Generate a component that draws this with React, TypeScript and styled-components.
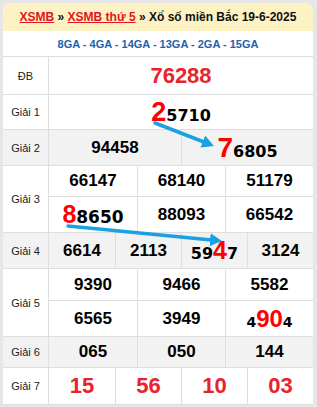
import styled, { createGlobalStyle } from 'styled-components';

const GlobalStyle = createGlobalStyle`
  html, body {
    margin: 0;
    padding: 0;
    background: #e6e6e6;
  }
  body {
    font-family: "Liberation Sans", Arial, sans-serif;
  }
`;

const Page = styled.div`
  padding: 3px 4px 0 3px;
`;

const Board = styled.div`
  position: relative;
  width: 310px;
  background: #fff;
  border-radius: 8px 8px 0 0;
  overflow: hidden;
`;

const Title = styled.h2`
  margin: 0;
  height: 28px;
  display: flex;
  align-items: center;
  justify-content: center;
  background: #fdf2c4;
  font-size: 12px;
  font-weight: bold;
  color: #111;
  white-space: pre;
  a {
    color: #e3141b;
    text-decoration: underline;
  }
`;

const Codes = styled.div`
  height: 26px;
  box-sizing: border-box;
  border-bottom: 1px solid #dedede;
  display: flex;
  align-items: center;
  justify-content: center;
  font-size: 11px;
  font-weight: bold;
  color: #1e63ad;
`;

const PrizeRow = styled.div<{ $shaded?: boolean }>`
  display: flex;
  background: ${({ $shaded }) => ($shaded ? '#f2f2f2' : '#fff')};
`;

const Label = styled.div`
  width: 46px;
  flex: none;
  box-sizing: border-box;
  border-right: 1px solid #dedede;
  border-bottom: 1px solid #dedede;
  display: flex;
  align-items: center;
  justify-content: center;
  font-size: 11px;
  color: #222;
`;

const Lines = styled.div`
  flex: 1;
  display: flex;
  flex-direction: column;
`;

const Line = styled.div<{ $cols: number; $h: number }>`
  display: grid;
  grid-template-columns: repeat(${({ $cols }) => $cols}, 1fr);
  height: ${({ $h }) => $h}px;
  box-sizing: border-box;
  border-bottom: 1px solid #dedede;
`;

const Cell = styled.div`
  display: flex;
  align-items: center;
  justify-content: center;
  white-space: nowrap;
  & + & {
    border-left: 1px solid #dedede;
  }
`;

type Kind = 'plain' | 'jackpot' | 'seven' | 'big' | 'rest' | 'tiny';

const Num = styled.span<{ $kind: Kind; $size?: number }>`
  font-weight: bold;
  font-family: ${({ $kind }) =>
    $kind === 'rest' || $kind === 'tiny'
      ? '"DejaVu Sans", Verdana, sans-serif'
      : '"Liberation Sans", Arial, sans-serif'};
  font-size: ${({ $kind, $size }) =>
    $size
      ? `${$size}px`
      : $kind === 'jackpot' || $kind === 'seven'
        ? '22px'
        : $kind === 'rest'
          ? '16px'
          : $kind === 'tiny'
            ? '14px'
            : '17px'};
  color: ${({ $kind }) =>
    $kind === 'jackpot' || $kind === 'seven'
      ? '#e8232c'
      : $kind === 'big'
        ? '#ff0000'
        : '#000'};
`;

const Arrows = styled.svg`
  position: absolute;
  left: 0;
  top: 0;
  width: 100%;
  height: 100%;
  pointer-events: none;
`;

type Seg = { t: string; k?: Kind; s?: number };
type PrizeLine = { h: number; cells: Seg[][] };
type Prize = { label: string; shaded?: boolean; lines: PrizeLine[] };

const plain = (...nums: string[]) => nums.map((t) => [{ t }]);

const prizes: Prize[] = [
  { label: 'ĐB', lines: [{ h: 38, cells: [[{ t: '76288', k: 'jackpot' }]] }] },
  {
    label: 'Giải 1',
    lines: [{ h: 35, cells: [[{ t: '2', k: 'big', s: 27 }, { t: '5710', k: 'rest' }]] }],
  },
  {
    label: 'Giải 2',
    shaded: true,
    lines: [
      {
        h: 36,
        cells: [[{ t: '94458' }], [{ t: '7', k: 'big', s: 28 }, { t: '6805', k: 'rest' }]],
      },
    ],
  },
  {
    label: 'Giải 3',
    lines: [
      { h: 31, cells: plain('66147', '68140', '51179') },
      {
        h: 36,
        cells: [
          [{ t: '8', k: 'big', s: 25 }, { t: '8650', k: 'rest', s: 17 }],
          [{ t: '88093' }],
          [{ t: '66542' }],
        ],
      },
    ],
  },
  {
    label: 'Giải 4',
    shaded: true,
    lines: [
      {
        h: 36,
        cells: [
          [{ t: '6614' }],
          [{ t: '2113' }],
          [
            { t: '59', k: 'rest' },
            { t: '4', k: 'big', s: 25 },
            { t: '7', k: 'rest' },
          ],
          [{ t: '3124' }],
        ],
      },
    ],
  },
  {
    label: 'Giải 5',
    lines: [
      { h: 32, cells: plain('9390', '9466', '5582') },
      {
        h: 36,
        cells: [
          [{ t: '6565' }],
          [{ t: '3949' }],
          [
            { t: '4', k: 'tiny' },
            { t: '90', k: 'big', s: 24 },
            { t: '4', k: 'tiny' },
          ],
        ],
      },
    ],
  },
  { label: 'Giải 6', shaded: true, lines: [{ h: 31, cells: plain('065', '050', '144') }] },
  {
    label: 'Giải 7',
    lines: [
      {
        h: 37,
        cells: ['15', '56', '10', '03'].map((t) => [{ t, k: 'seven' as Kind }]),
      },
    ],
  },
];

const arrows = [
  { x1: 152, y1: 120, x2: 203.5, y2: 140 },
  { x1: 65, y1: 223, x2: 211, y2: 237.2 },
];

const App = () => (
  <>
    <GlobalStyle />
    <Page>
      <Board>
        <Title>
          <a>XSMB</a> » <a>XSMB thứ 5</a> » Xổ số miền Bắc 19-6-2025
        </Title>
        <Codes>8GA - 4GA - 14GA - 13GA - 2GA - 15GA</Codes>
        {prizes.map((prize) => (
          <PrizeRow key={prize.label} $shaded={prize.shaded}>
            <Label>{prize.label}</Label>
            <Lines>
              {prize.lines.map((line, i) => (
                <Line key={i} $cols={line.cells.length} $h={line.h}>
                  {line.cells.map((segs, j) => (
                    <Cell key={j}>
                      <span>
                        {segs.map((seg, n) => (
                          <Num key={n} $kind={seg.k ?? 'plain'} $size={seg.s}>
                            {seg.t}
                          </Num>
                        ))}
                      </span>
                    </Cell>
                  ))}
                </Line>
              ))}
            </Lines>
          </PrizeRow>
        ))}
        <Arrows>
          <defs>
            <marker
              id="head"
              markerUnits="userSpaceOnUse"
              markerWidth="13"
              markerHeight="13"
              refX="4"
              refY="6.5"
              orient="auto"
            >
              <path d="M0,0 L12,6.5 L0,13 z" fill="#1ba1e2" />
            </marker>
          </defs>
          {arrows.map((a, i) => (
            <line
              key={i}
              {...a}
              stroke="#1ba1e2"
              strokeWidth="3.5"
              strokeLinecap="round"
              markerEnd="url(#head)"
            />
          ))}
        </Arrows>
      </Board>
    </Page>
  </>
);

export default App;
